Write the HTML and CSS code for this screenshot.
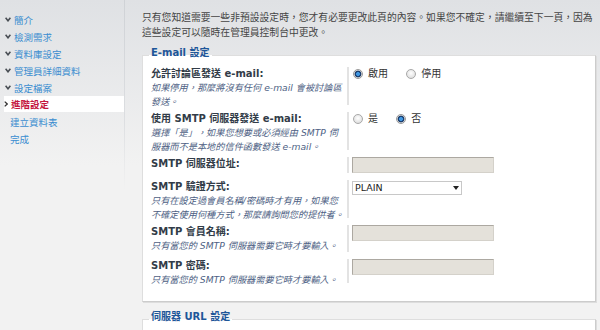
FILE: index.html
```html
<!DOCTYPE html>
<html lang="zh-TW">
<head>
    <meta charset="UTF-8">
    <meta name="viewport" content="width=device-width, initial-scale=1.0">
    <title>進階設定</title>
    <link rel="stylesheet" href="styles.css">
</head>
<body>
    <div class="page">
        <aside class="sidebar">
            <ul class="steps">
                <li class="step"><svg class="mark" viewBox="0 0 6 5"><polyline points="0.6,0.8 3,3.8 5.4,0.8"/></svg>簡介</li>
                <li class="step"><svg class="mark" viewBox="0 0 6 5"><polyline points="0.6,0.8 3,3.8 5.4,0.8"/></svg>檢測需求</li>
                <li class="step"><svg class="mark" viewBox="0 0 6 5"><polyline points="0.6,0.8 3,3.8 5.4,0.8"/></svg>資料庫設定</li>
                <li class="step"><svg class="mark" viewBox="0 0 6 5"><polyline points="0.6,0.8 3,3.8 5.4,0.8"/></svg>管理員詳細資料</li>
                <li class="step"><svg class="mark" viewBox="0 0 6 5"><polyline points="0.6,0.8 3,3.8 5.4,0.8"/></svg>設定檔案</li>
                <li class="step current"><svg class="arrow" viewBox="0 0 4 6"><polyline points="0.7,0.6 3.2,3 0.7,5.4"/></svg>進階設定</li>
                <li class="step todo">建立資料表</li>
                <li class="step todo">完成</li>
            </ul>
        </aside>

        <main class="content">
            <p class="intro">只有您知道需要一些非預設設定時，您才有必要更改此頁的內容。如果您不確定，請繼續至下一頁，因為這些設定可以隨時在管理員控制台中更改。</p>

            <fieldset class="group">
                <legend>E-mail 設定</legend>
                <dl class="fields">
                    <dt>
                        <span class="label">允許討論區發送 e-mail:</span>
                        <span class="hint">如果停用，那麼將沒有任何 e-mail 會被討論區發送。</span>
                    </dt>
                    <dd>
                        <label class="choice"><input class="radio" type="radio" name="email_enable" checked>啟用</label>
                        <label class="choice"><input class="radio" type="radio" name="email_enable">停用</label>
                    </dd>

                    <dt>
                        <span class="label">使用 SMTP 伺服器發送 e-mail:</span>
                        <span class="hint">選擇「是」，如果您想要或必須經由 SMTP 伺服器而不是本地的信件函數發送 e-mail。</span>
                    </dt>
                    <dd>
                        <label class="choice"><input class="radio" type="radio" name="smtp_delivery">是</label>
                        <label class="choice"><input class="radio" type="radio" name="smtp_delivery" checked>否</label>
                    </dd>

                    <dt>
                        <span class="label">SMTP 伺服器位址:</span>
                    </dt>
                    <dd><input class="text" type="text"></dd>

                    <dt>
                        <span class="label">SMTP 驗證方式:</span>
                        <span class="hint">只有在設定過會員名稱/密碼時才有用，如果您不確定使用何種方式，那麼請詢問您的提供者。</span>
                    </dt>
                    <dd>
                        <div class="select">
                            <select>
                                <option>PLAIN</option>
                                <option>LOGIN</option>
                                <option>CRAM-MD5</option>
                            </select>
                        </div>
                    </dd>

                    <dt class="tall">
                        <span class="label">SMTP 會員名稱:</span>
                        <span class="hint">只有當您的 SMTP 伺服器需要它時才要輸入。</span>
                    </dt>
                    <dd><input class="text" type="text"></dd>

                    <dt>
                        <span class="label">SMTP 密碼:</span>
                        <span class="hint">只有當您的 SMTP 伺服器需要它時才要輸入。</span>
                    </dt>
                    <dd><input class="text" type="password"></dd>
                </dl>
            </fieldset>

            <fieldset class="group next">
                <legend>伺服器 URL 設定</legend>
            </fieldset>
        </main>
    </div>
</body>
</html>
```

FILE: styles.css
```css
body {
    margin: 0;
    overflow: hidden;
    font-family: "DejaVu Sans", "Noto Sans CJK TC", sans-serif;
    background: #f2f2f2 linear-gradient(#dfe1e4, #f2f2f2 165px) no-repeat;
}

.page {
    display: flex;
    min-height: 100vh;
}

/* 左側步驟 */
.sidebar {
    width: 124px;
    flex: none;
    border-right: 1px solid #d0d3d6;
    border-image: linear-gradient(#cfd2d6, #dcdee1 120px, #f2f2f2 190px) 1;
}

.steps {
    list-style: none;
    margin: 0;
    padding: 11px 0 0;
    font-size: 9.5px;
}

.step {
    display: flex;
    align-items: center;
    height: 17px;
    color: #3a8dd0;
}

.step .mark {
    width: 6px;
    height: 5px;
    margin: 0 3px 0 5px;
    fill: none;
    stroke: #4a4f55;
    stroke-width: 1.6;
}

.step.current {
    height: 16px;
    margin: 0 0 1px 4px;
    background-color: #fff;
    color: #c4163e;
    font-weight: bold;
}

.step .arrow {
    width: 4px;
    height: 6px;
    margin-right: 3px;
    fill: none;
    stroke: #333;
    stroke-width: 1.3;
}

.step.todo {
    padding-left: 10px;
}

/* 主要內容 */
.content {
    flex: 1;
    min-width: 0;
    padding: 10px 4px 0 17px;
}

.intro {
    margin: 0;
    font-size: 9.8px;
    line-height: 15px;
    color: #444;
}

.group {
    margin: 6px 0 0;
    padding: 2px 8px 14px;
    background-color: #fff;
    border: 1px solid #dedede;
    border-right-color: #cccccc;
    border-bottom-color: #cccccc;
    box-shadow: 1px 1px 0 #dddddd;
}

.group.next {
    margin-top: 8px;
    min-height: 40px;
}

.group legend {
    margin-left: -2px;
    padding: 0 2px 5px;
    font-size: 10px;
    line-height: 14px;
    font-weight: bold;
    color: #1d5699;
}

.fields {
    display: grid;
    grid-template-columns: 196px 1fr;
    row-gap: 3px;
    margin: 0;
}

.fields dt {
    padding-right: 2px;
    font-size: 10px;
    line-height: 14px;
}

.fields dt.tall {
    padding-bottom: 3px;
}

.label {
    display: block;
    font-weight: bold;
    color: #323c48;
}

.hint {
    display: block;
    font-size: 9.2px;
    font-style: italic;
    color: #4e5f84;
}

.fields dd {
    margin: 0 0 4px;
    padding-left: 3px;
    border-left: 2px solid #e3e3e3;
    font-size: 10px;
    line-height: 14px;
    color: #333;
}

.choice {
    display: inline-flex;
    align-items: center;
    margin-right: 14px;
}

.radio {
    appearance: none;
    box-sizing: border-box;
    width: 10px;
    height: 10px;
    margin: 0 5px 0 1px;
    border: 1px solid #a8a8a8;
    border-radius: 50%;
    background: radial-gradient(circle at 50% 40%, #ffffff, #d6d6d6);
}

.radio:checked {
    border-color: #9a9a9a;
    background: radial-gradient(circle, #3f97e2 0 1.6px, #1c3e6e 2.3px 3.1px, #dcdcdc 3.7px);
}

.text {
    display: block;
    box-sizing: border-box;
    width: 142px;
    height: 16px;
    margin: 0;
    border: 1px solid #d4d1ca;
    border-top-color: #aca8a1;
    border-left-color: #aca8a1;
    background-color: #e4e1da;
}

.select {
    position: relative;
    width: 110px;
    height: 14px;
    margin-top: 1px;
}

.select select {
    appearance: none;
    box-sizing: border-box;
    width: 100%;
    height: 100%;
    margin: 0;
    padding: 0 0 0 2px;
    border: 1px solid #c8c8c8;
    border-radius: 0;
    background-color: #fff;
    font-family: "DejaVu Sans", sans-serif;
    font-size: 9.5px;
    line-height: 12px;
    color: #222;
}

.select::after {
    content: "";
    position: absolute;
    right: 3px;
    top: 5px;
    border-top: 4px solid #222;
    border-left: 3px solid transparent;
    border-right: 3px solid transparent;
    pointer-events: none;
}
```
